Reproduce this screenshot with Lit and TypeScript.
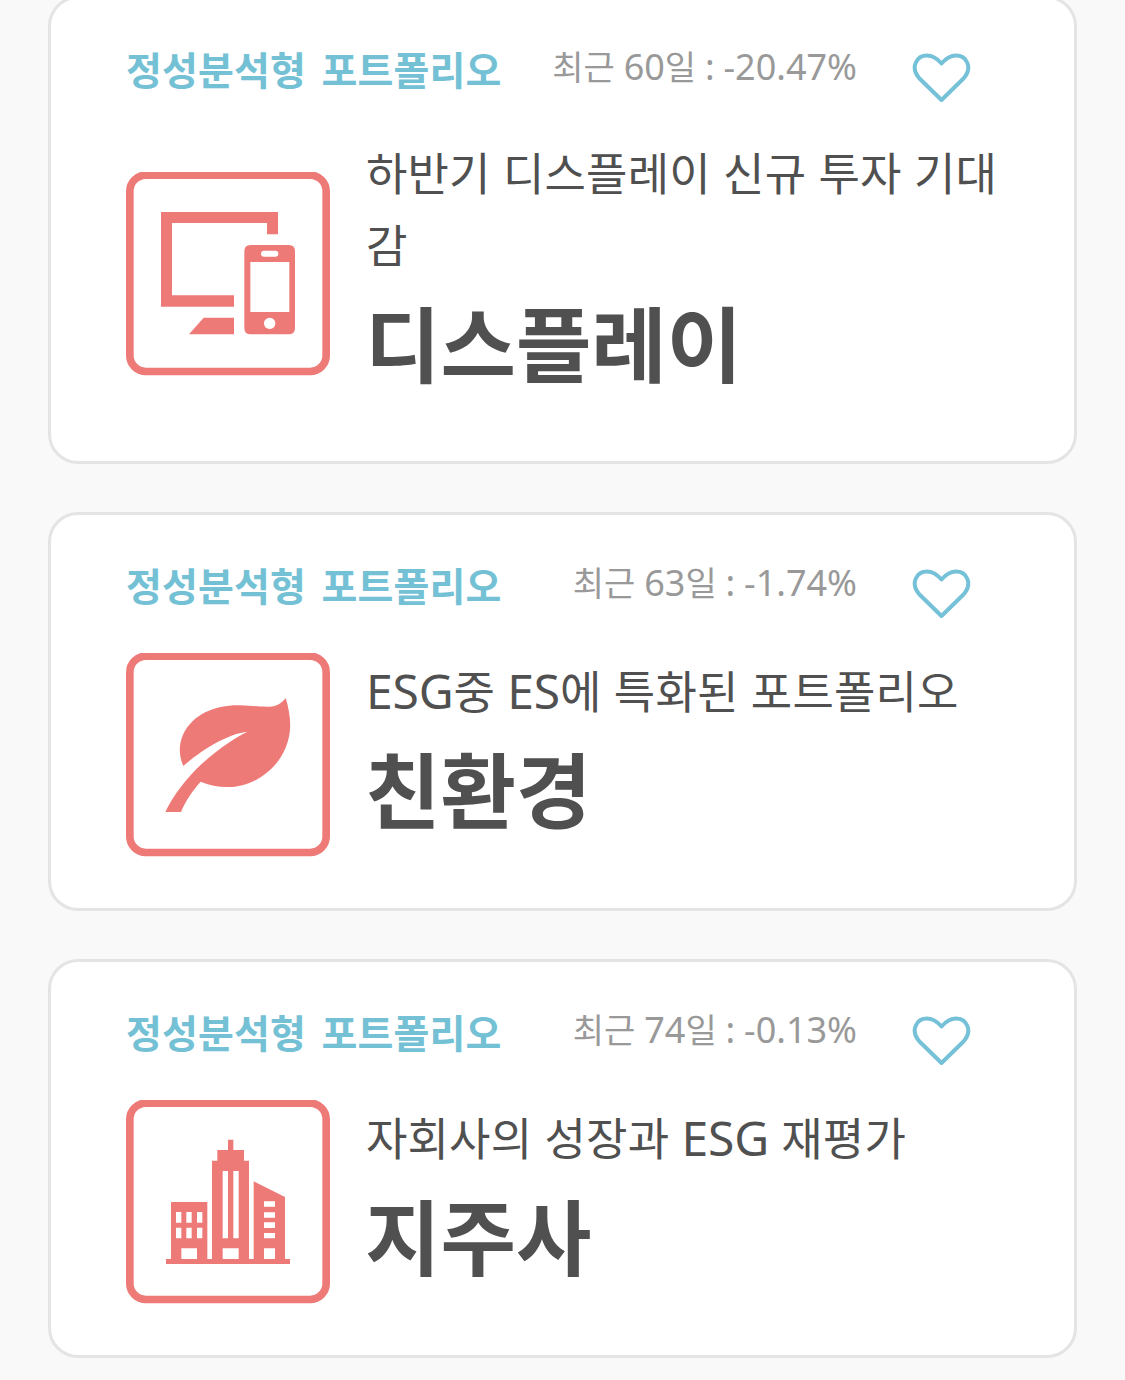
import { LitElement, html, css, svg } from "lit";
import { customElement, property } from "lit/decorators.js";

interface Portfolio {
  kind: string;
  recent: string;
  summary: string;
  name: string;
  icon: string;
}

const PORTFOLIOS: Portfolio[] = [
  { kind: "정성분석형 포트폴리오", recent: "최근 60일 : -20.47%", summary: "하반기 디스플레이 신규 투자 기대감", name: "디스플레이", icon: "display" },
  { kind: "정성분석형 포트폴리오", recent: "최근 63일 : -1.74%", summary: "ESG중 ES에 특화된 포트폴리오", name: "친환경", icon: "leaf" },
  { kind: "정성분석형 포트폴리오", recent: "최근 74일 : -0.13%", summary: "자회사의 성장과 ESG 재평가", name: "지주사", icon: "building" },
];

const ICONS: Record<string, unknown> = {
  display: svg`
    <path d="M105 120H456V187H423V153H138V370H324V404H105Z"/>
    <path d="M233 437H324V487H189Z"/>
    <path fill-rule="evenodd" d="M374 219H488Q507 219 507 238V468Q507 487 488 487H374Q355 487 355 468V238Q355 219 374 219ZM414 236a9 9 0 0 0 0 18H448a9 9 0 0 0 0-18ZM373 270V420H490V270ZM431 437a17 17 0 1 0 .1 0Z"/>`,
  leaf: svg`
    <path d="M479 135C490 172 494 200 492 230C484 326 400 402 304 402C276 402 248 396 224 386C200 412 178 445 165 477H118C153 402 236 303 364 236C313 241 232 285 172 339C158 308 158 275 171 245C201 182 270 155 343 157C380 158 405 162 430 161C452 160 467 151 479 135Z"/>`,
  building: svg`
    <path fill-rule="evenodd" d="M120 477H135V306H244V477H258V182H274V150H306V119H322V150H354V182H369V477H383V244L477 291V477H492V492H120Z
      M150 336V368H166V336ZM181 336V368H197V336ZM213 336V368H229V336Z
      M150 383V415H166V383ZM181 383V415H197V383ZM213 383V415H229V383Z
      M166 445V477H213V445ZM290 213V415H306V213ZM322 213V415H338V213ZM290 445V477H338V445Z
      M414 304V320H447V304ZM414 337V353H447V337ZM414 367V384H447V367ZM414 399V415H447V399ZM414 445V477H447V445Z"/>`,
};

/** Wraps Latin runs so they can be set at their own optical size. */
const mixed = (text: string) =>
  text
    .split(/([\x21-\x7e]+)/)
    .filter(Boolean)
    .map((run) => (/^[\x21-\x7e]/.test(run) ? html`<span class="latin">${run}</span>` : run));

@customElement("portfolio-card")
export class PortfolioCard extends LitElement {
  @property({ attribute: false }) item!: Portfolio;

  static styles = css`
    :host {
      display: flex;
      flex-direction: column;
      box-sizing: border-box;
      border: 3px solid #e4e4e4;
      border-radius: 30px;
      background: #fff;
      padding: 33px 75px 51px;
    }
    .head { display: flex; height: 80px; align-items: flex-start; }
    .kind { font-size: 39px; font-weight: 700; line-height: 76px; letter-spacing: 0.15px; word-spacing: 5px; color: #74c1d5; white-space: pre; }
    .recent { margin-left: auto; font-size: 34px; line-height: 70px; color: #999; white-space: pre; }
    .recent .latin { font-size: 36px; }
    .heart { width: 60px; height: 52px; margin: 21px 28px 0 54px; flex: none; }
    .body { display: flex; align-items: center; gap: 36px; margin-top: 25px; }
    .icon { width: 204px; height: 204px; flex: none; fill: #ee7a78; }
    .frame { fill: none; stroke: #ee7a78; stroke-width: 23; }
    .text { width: 640px; color: #505050; padding: 1px 0 2px; }
    .summary { font-size: 45px; line-height: 72px; letter-spacing: 0.15px; word-spacing: 0.5px; word-break: break-all; }
    .summary .latin { font-size: 48px; letter-spacing: -0.2px; }
    .latin { line-height: 1; }
    .name { font-size: 82px; font-weight: 700; line-height: 126px; margin: -1px 0 0 -1px; padding-bottom: 1px; white-space: pre; }
  `;

  render() {
    const p = this.item;
    return html`
      <div class="head">
        <div class="kind">${p.kind}</div>
        <div class="recent">${mixed(p.recent)}</div>
        <svg class="heart" viewBox="0 0 60 52" fill="none" stroke="#74c1d8" stroke-width="4" stroke-linejoin="round">
          <path d="M30.500 47L8.500 25.500C-1.500 14 6 2.500 16 2.500C22.500 2.500 27 6.500 30.500 10.500C34 6.500 38.500 2.500 45 2.500C55 2.500 62.500 14 52.500 25.500Z" />
        </svg>
      </div>
      <div class="body">
        <svg class="icon" viewBox="0 0 612 612">
          <rect class="frame" x="11.500" y="9.500" width="589" height="589" rx="48" />
          ${ICONS[p.icon]}
        </svg>
        <div class="text">
          <div class="summary">${mixed(p.summary)}</div>
          <div class="name">${p.name}</div>
        </div>
      </div>
    `;
  }
}

@customElement("app-root")
export class AppRoot extends LitElement {
  static styles = css`
    :host {
      display: block;
      height: 1380px;
      overflow: hidden;
      background: #f9f9f9;
      font-family: "Noto Sans", "Noto Sans CJK KR", sans-serif;
    }
    .list { display: flex; flex-direction: column; gap: 48px; margin: -4px 48px 0; }
  `;

  render() {
    return html`<div class="list">${PORTFOLIOS.map((p) => html`<portfolio-card .item=${p}></portfolio-card>`)}</div>`;
  }
}
